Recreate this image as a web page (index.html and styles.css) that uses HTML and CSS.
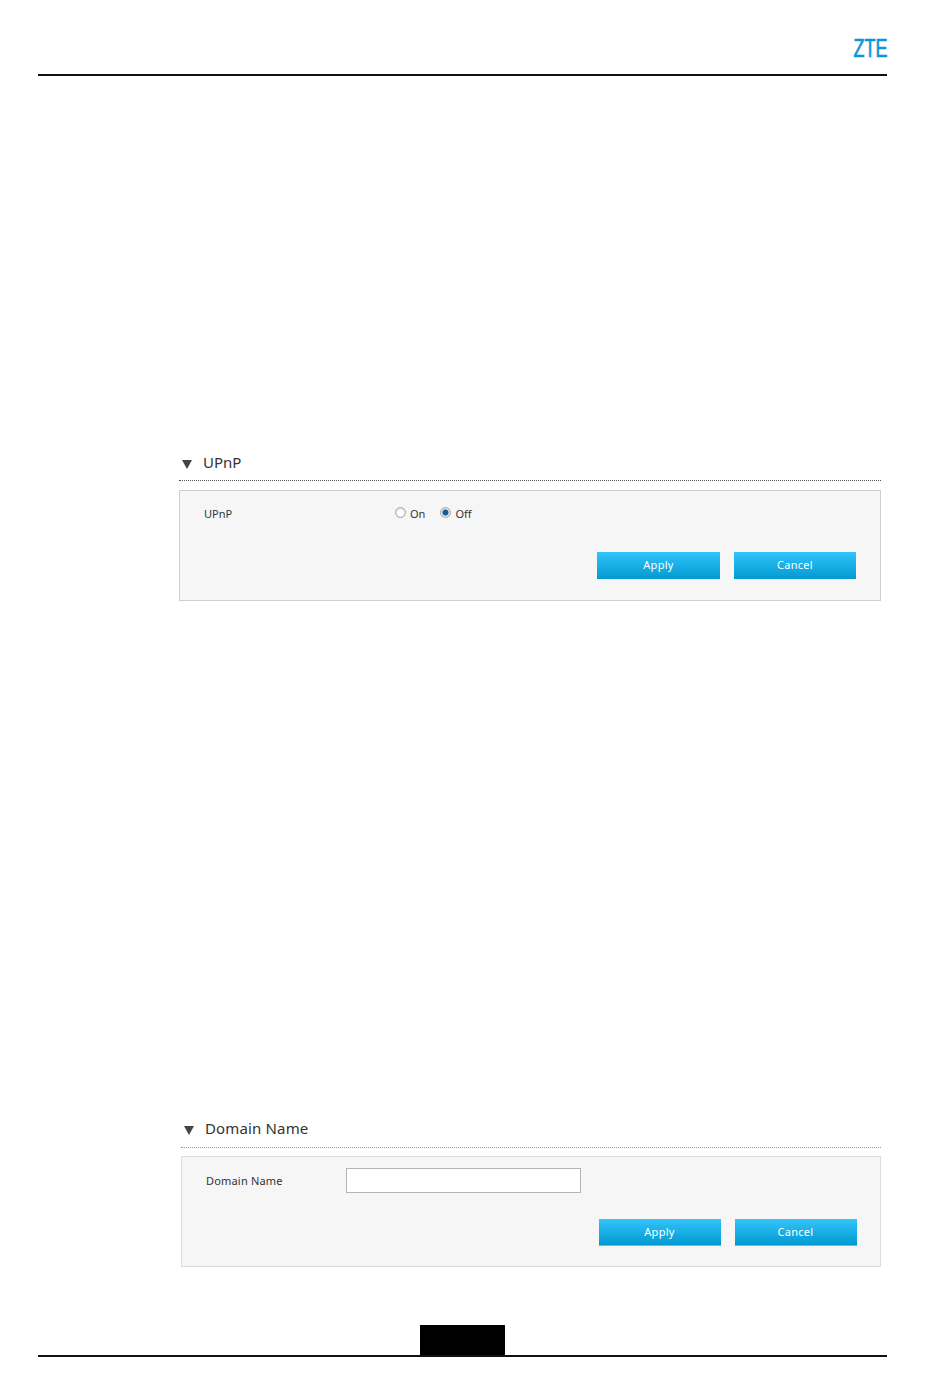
FILE: index.html
```html
<!DOCTYPE html>
<html lang="en">
<head>
<meta charset="utf-8">
<title>UPnP and Domain Name</title>
<link rel="stylesheet" href="styles.css">
</head>
<body>
<div class="page">
  <header class="top">
    <svg class="logo" width="50" height="30" viewBox="0 0 50 30"><text x="0.5" y="19" textLength="34" lengthAdjust="spacingAndGlyphs" class="logo-text">ZTE</text></svg>
  </header>

  <section class="block block-upnp">
    <div class="head">
      <span class="tri"></span>
      <h2 class="title">UPnP</h2>
    </div>
    <div class="panel">
      <div class="row">
        <span class="label label-upnp">UPnP</span>
        <label class="opt"><input class="radio" type="radio" name="upnp"><span>On</span></label>
        <label class="opt"><input class="radio" type="radio" name="upnp" checked><span>Off</span></label>
      </div>
      <div class="actions">
        <button class="btn btn-wide" type="button">Apply</button>
        <button class="btn" type="button">Cancel</button>
      </div>
    </div>
  </section>

  <section class="block block-domain">
    <div class="head head-domain">
      <span class="tri tri-domain"></span>
      <h2 class="title title-domain">Domain Name</h2>
    </div>
    <div class="panel panel-domain">
      <div class="row row-domain">
        <span class="label label-domain">Domain Name</span>
        <input class="field" type="text">
      </div>
      <div class="actions actions-domain">
        <button class="btn btn-domain" type="button">Apply</button>
        <button class="btn btn-domain" type="button">Cancel</button>
      </div>
    </div>
  </section>

  <footer class="bottom">
    <div class="page-no"></div>
  </footer>
</div>
</body>
</html>
```
FILE: styles.css
```css
html, body { margin: 0; padding: 0; background: #fff; }
.page {
  width: 950px;
  height: 1397px;
  box-sizing: border-box;
  padding: 38px 63px 0 38px;
  font-family: "Noto Sans", "Open Sans", sans-serif;
  color: #333;
  display: flex;
  flex-direction: column;
}
.top {
  height: 36px;
  border-bottom: 2px solid #111;
  display: flex;
  justify-content: flex-end;
  align-items: flex-start;
}
.logo { display: block; margin-right: -16px; }
.logo-text {
  font-family: "Liberation Sans", sans-serif;
  font-size: 25px;
  fill: #0a96d8;
  stroke: #0a96d8;
  stroke-width: 0.7px;
}
.block { margin-left: 141px; margin-right: 6px; }
.block-upnp { margin-top: 374px; }
.block-domain { margin-top: 516px; margin-left: 143px; }
.head {
  height: 30px;
  display: flex;
  align-items: center;
  border-bottom: 1px dotted #555;
}
.head-domain { border-bottom-color: #999; }
.tri {
  width: 0;
  height: 0;
  margin-left: 3px;
  margin-right: 11px;
  position: relative;
  top: -1px;
  border-left: 5px solid transparent;
  border-right: 5px solid transparent;
  border-top: 9px solid #444;
}
.tri-domain { top: -2px; }
.title {
  margin: 0;
  font-size: 15px;
  font-weight: 400;
  color: #333;
  line-height: 22px;
  position: relative;
  top: -3px;
}
.title-domain { top: -4px; letter-spacing: 0.15px; }
.panel {
  margin-top: 9px;
  height: 109px;
  background: #f6f6f6;
  border: 1px solid #cfcfcf;
  padding: 0 24px;
}
.panel-domain { border-color: #dcdcdc; margin-top: 8px; padding-right: 23px; }
.row {
  height: 44px;
  display: flex;
  align-items: center;
  font-size: 11px;
  color: #333;
}
.label { display: block; }
.label-upnp { width: 191px; }
.label-domain { width: 140px; letter-spacing: 0.18px; }
.opt {
  display: flex;
  align-items: center;
  gap: 4px;
  margin-right: 15px;
}
.radio {
  appearance: none;
  margin: 0;
  width: 11px;
  height: 11px;
  border-radius: 50%;
  border: 1px solid #a8a8a8;
  background: radial-gradient(circle at 50% 60%, #fff 30%, #d0d0d0 100%);
  box-sizing: border-box;
  position: relative;
  top: -1px;
}
.radio:checked {
  background: radial-gradient(circle, #0b5f9e 0 2.6px, #e0e0e0 3.4px);
}
.field {
  width: 235px;
  height: 25px;
  box-sizing: border-box;
  border: 1px solid #b5b5b5;
  background: #fff;
  margin: 0;
}
.row-domain { height: 47px; }
.actions {
  display: flex;
  justify-content: flex-end;
  gap: 14px;
  margin-top: 17px;
}
.actions-domain { margin-top: 15px; }
.btn {
  width: 122px;
  height: 27px;
  border: 0;
  padding: 0 0 2px;
  margin: 0;
  background: linear-gradient(#33c4fc, #019ad0);
  color: #fff;
  font-family: "Noto Sans", sans-serif;
  font-size: 11px;
  letter-spacing: 0.3px;
}
.btn-wide { width: 123px; }
.btn-domain { border-bottom: 1px solid #5cc0e4; padding-right: 1px; }
.bottom {
  margin-top: auto;
  margin-bottom: 40px;
  border-bottom: 2px solid #111;
  display: flex;
  padding-left: 382px;
}
.page-no {
  width: 85px;
  height: 30px;
  background: #000;
}
```
